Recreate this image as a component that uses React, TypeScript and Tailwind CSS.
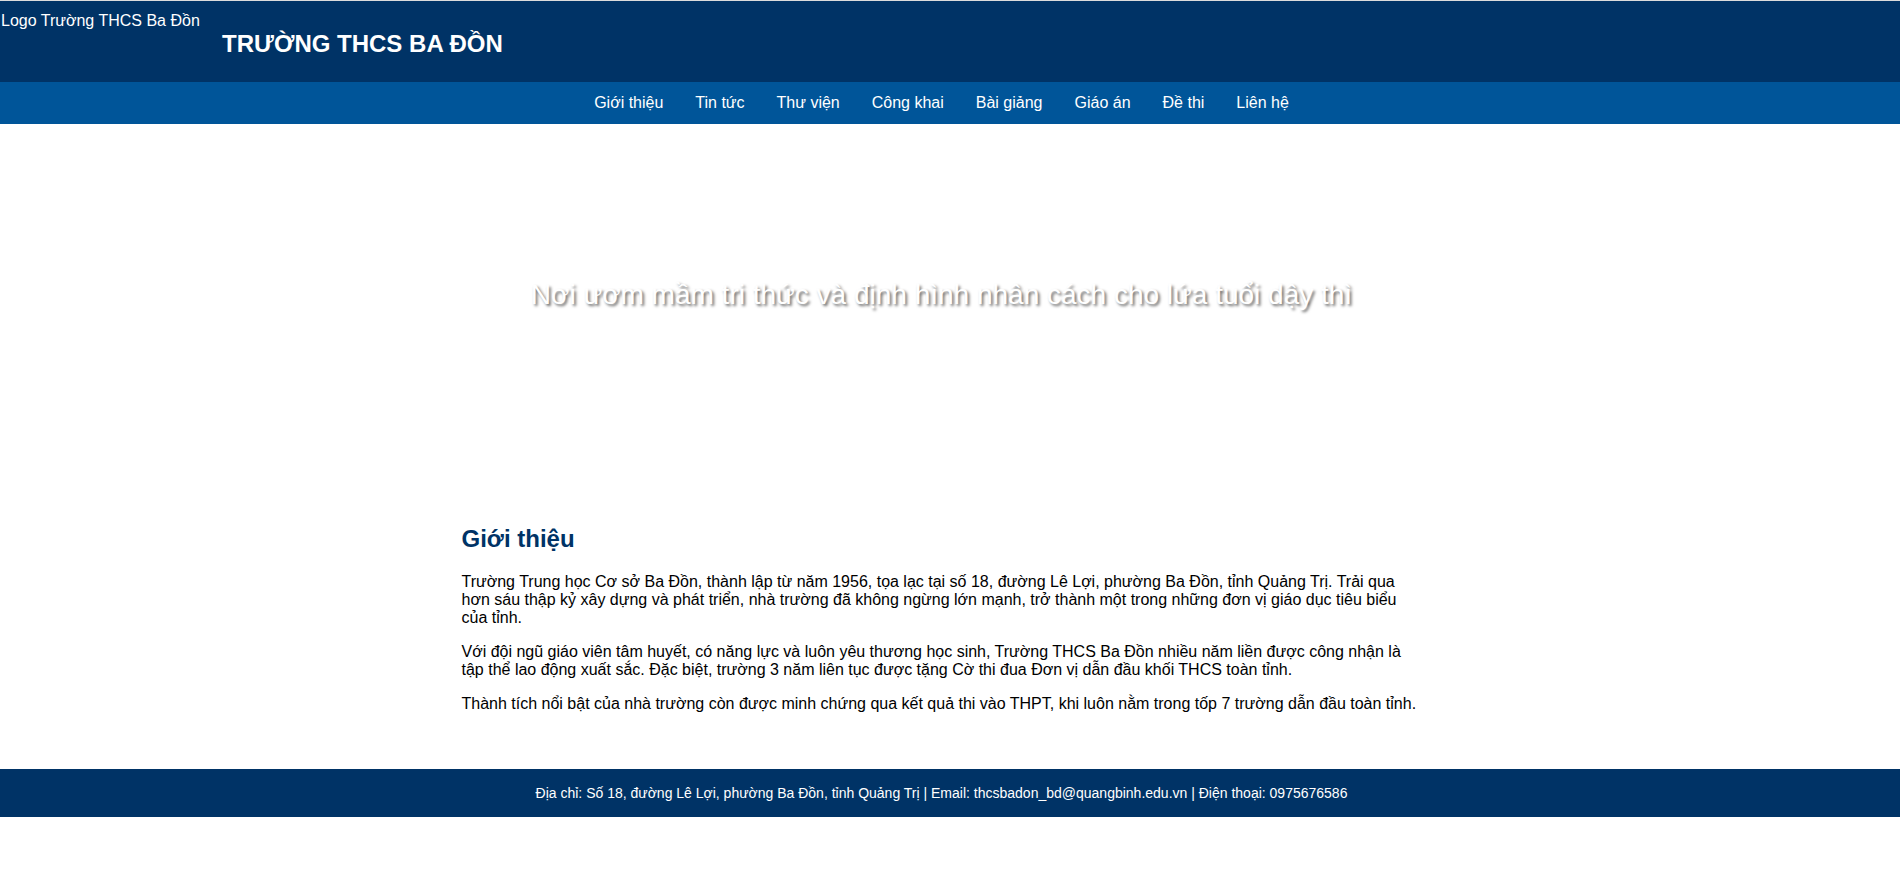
import React from "react";

export default function App() {
  const navItems = [
    "Giới thiệu",
    "Tin tức",
    "Thư viện",
    "Công khai",
    "Bài giảng",
    "Giáo án",
    "Đề thi",
    "Liên hệ",
  ];

  return (
    <div className="min-h-[872px] bg-white font-['Liberation_Sans',Arial,sans-serif] text-black">
      <div className="h-px bg-[#dcdcdc]" />

      {/* header */}
      <header className="flex h-[81px] items-start bg-[#003366] text-white">
        <div className="ml-[1px] w-[200px] pt-[11px] text-[16px] leading-[normal]">
          Logo Trường THCS Ba Đồn
        </div>
        <h1 className="ml-[21px] pt-[29px] text-[24px] font-bold leading-[normal]">
          TRƯỜNG THCS BA ĐỒN
        </h1>
      </header>

      {/* nav */}
      <nav className="bg-[#005599]">
        <ul className="flex h-[42px] items-center justify-center gap-8 pr-[17px]">
          {navItems.map((item) => (
            <li key={item}>
              <a href="#" className="text-[16px] leading-[normal] text-white">
                {item}
              </a>
            </li>
          ))}
        </ul>
      </nav>

      {/* hero */}
      <section className="flex h-[341px] items-center justify-center pr-[17px]">
        <h2 className="text-[28px] leading-[normal] text-white [text-shadow:2px_2px_3px_rgba(0,0,0,0.6)]">
          Nơi ươm mầm tri thức và định hình nhân cách cho lứa tuổi dậy thì
        </h2>
      </section>

      {/* intro */}
      <div className="pr-[17px]">
        <section className="mx-auto w-[960px] pt-[60px] pb-[56px] text-[16px] leading-[normal]">
          <h2 className="mb-5 text-[24px] font-bold text-[#003366]">Giới thiệu</h2>
          <p className="mb-4">
            Trường Trung học Cơ sở Ba Đồn, thành lập từ năm 1956, tọa lạc tại số 18, đường Lê Lợi, phường Ba Đồn, tỉnh Quảng Trị. Trải qua hơn sáu thập kỷ xây dựng và phát triển, nhà trường đã không ngừng lớn mạnh, trở thành một trong những đơn vị giáo dục tiêu biểu của tỉnh.
          </p>
          <p className="mb-4">
            Với đội ngũ giáo viên tâm huyết, có năng lực và luôn yêu thương học sinh, Trường THCS Ba Đồn nhiều năm liền được công nhận là tập thể lao động xuất sắc. Đặc biệt, trường 3 năm liên tục được tặng Cờ thi đua Đơn vị dẫn đầu khối THCS toàn tỉnh.
          </p>
          <p>
            Thành tích nổi bật của nhà trường còn được minh chứng qua kết quả thi vào THPT, khi luôn nằm trong tốp 7 trường dẫn đầu toàn tỉnh.
          </p>
        </section>
      </div>

      {/* footer */}
      <footer className="flex h-[48px] items-center justify-center bg-[#003366] pr-[17px] text-[14px] leading-[normal] text-white">
        Địa chỉ: Số 18, đường Lê Lợi, phường Ba Đồn, tỉnh Quảng Trị | Email: thcsbadon_bd@quangbinh.edu.vn | Điện thoại: 0975676586
      </footer>
    </div>
  );
}
